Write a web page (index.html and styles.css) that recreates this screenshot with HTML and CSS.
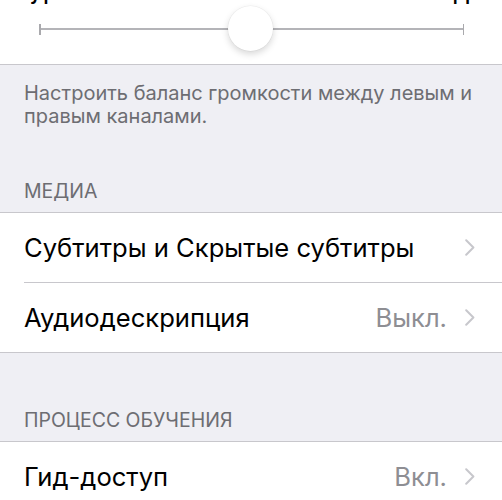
FILE: index.html
```html
<!DOCTYPE html>
<html lang="ru">
<head>
<meta charset="utf-8">
<link rel="stylesheet" href="styles.css">
</head>
<body>
<div class="page">
  <section class="top">
    <div class="labels"><span class="lbl">Л</span><span class="lbl">П</span></div>
    <div class="slider">
      <div class="track">
        <span class="tick"></span>
        <span class="line"></span>
        <span class="tick"></span>
        <span class="thumb"></span>
      </div>
    </div>
  </section>
  <p class="footer">Настроить баланс громкости между левым и правым каналами.</p>
  <div class="header header-first">МЕДИА</div>
  <div class="group">
    <div class="row">
      <span class="title">Субтитры и Скрытые субтитры</span>
      <span class="right">
        <svg class="chev" width="10" height="17" viewBox="0 0 10 17"><path d="M1.2 1.2 L8.4 8.5 L1.2 15.8" fill="none" stroke="#c7c7cc" stroke-width="2" stroke-linecap="round" stroke-linejoin="round"/></svg>
      </span>
    </div>
    <div class="row">
      <span class="title">Аудиодескрипция</span>
      <span class="right">
        <span class="value">Выкл.</span>
        <svg class="chev" width="10" height="17" viewBox="0 0 10 17"><path d="M1.2 1.2 L8.4 8.5 L1.2 15.8" fill="none" stroke="#c7c7cc" stroke-width="2" stroke-linecap="round" stroke-linejoin="round"/></svg>
      </span>
    </div>
  </div>
  <div class="header header-second">ПРОЦЕСС ОБУЧЕНИЯ</div>
  <div class="group">
    <div class="row">
      <span class="title">Гид-доступ</span>
      <span class="right">
        <span class="value">Вкл.</span>
        <svg class="chev" width="10" height="17" viewBox="0 0 10 17"><path d="M1.2 1.2 L8.4 8.5 L1.2 15.8" fill="none" stroke="#c7c7cc" stroke-width="2" stroke-linecap="round" stroke-linejoin="round"/></svg>
      </span>
    </div>
  </div>
</div>
</body>
</html>
```

FILE: styles.css
```css
html, body {
  margin: 0;
  padding: 0;
  background: #efeff4;
}
body {
  font-family: Inter, "Liberation Sans", Arial, sans-serif;
  color: #000;
  overflow: hidden;
}
.page {
  width: 502px;
  height: 500px;
  overflow: hidden;
}
.top {
  background: #fff;
  border-bottom: 1px solid #c8c7cc;
  height: 65px;
  box-sizing: border-box;
  overflow: hidden;
}
.labels {
  display: flex;
  justify-content: space-between;
  padding: 0 31px 0 30px;
  height: 26px;
  margin-top: -18px;
  font-size: 26px;
  line-height: 26px;
}
.slider {
  height: 42px;
  display: flex;
  align-items: center;
  padding: 0 38px 0 39px;
}
.track {
  position: relative;
  flex: 1;
  display: flex;
  align-items: center;
  height: 11px;
}
.tick {
  width: 1.5px;
  height: 11px;
  background: #a9a9ad;
}
.line {
  flex: 1;
  height: 1.5px;
  background: #b4b4b8;
}
.thumb {
  position: absolute;
  left: 50%;
  top: 50%;
  width: 45px;
  height: 45px;
  margin: -23.5px 0 0 -23.5px;
  border-radius: 50%;
  background: #fff;
  box-shadow: 0 3px 7px rgba(0,0,0,0.16), 0 0 0 0.5px rgba(0,0,0,0.06);
}
.footer {
  margin: 0;
  padding: 17px 24px 0;
  font-size: 20px;
  line-height: 23px;
  color: #6d6d72;
}
.header {
  padding: 0 24px 10px;
  font-size: 19.5px;
  line-height: 22px;
  color: #6d6d72;
}
.header-first { margin-top: 52px; }
.header-second { margin-top: 56px; }
.group {
  background: #fff;
  border-top: 1px solid #c8c7cc;
  border-bottom: 1px solid #c8c7cc;
}
.row {
  height: 69px;
  display: flex;
  align-items: center;
  justify-content: space-between;
  padding: 0 27px 0 24px;
  font-size: 25.6px;
  box-sizing: content-box;
}
.row + .row {
  border-top: 1px solid #c8c7cc;
  margin-left: 24px;
  padding-left: 0;
}
.title { white-space: nowrap; }
.right {
  display: flex;
  align-items: center;
  gap: 18px;
}
.value { color: #8e8e93; }
.chev { display: block; }
```
